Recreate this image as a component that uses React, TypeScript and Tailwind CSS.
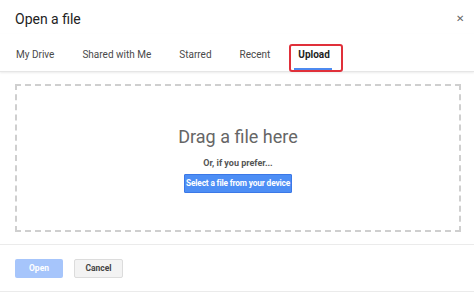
import React from "react";

export default function App() {
  const tabs = ["My Drive", "Shared with Me", "Starred", "Recent"];
  return (
    <div
      className="w-[474px] h-[294px] bg-white relative overflow-hidden flex flex-col"
      style={{ fontFamily: "Roboto, 'Liberation Sans', sans-serif" }}
    >
      <div className="h-[34px] pl-[15px] pt-[9px] text-[14px] leading-[20px] text-[#222] relative">
        Open a file
        <span className="absolute right-[10px] top-[12px] text-[#666] text-[10px] leading-[14px]">✕</span>
      </div>
      <div className="h-[38px] flex items-stretch pl-[2px] border-b border-[#e6e6e6] shadow-[0_1px_2px_rgba(0,0,0,0.08)] relative z-10">
        {tabs.map((t) => (
          <div key={t} className="px-[14px] flex items-center text-[10px] text-[#4a4a4a] pt-[4px]">
            {t}
          </div>
        ))}
        <div className="relative px-[14px] flex items-center text-[10px] font-bold text-[#222] pt-[4px]">
          Upload
          <div className="absolute left-[10px] right-[12px] bottom-[1px] h-[2px] bg-[#4d8af0]" />
          <div className="absolute left-[5px] right-[1px] top-[10px] bottom-[-1px] border-2 border-[#e0303a] rounded-[3px]" />
        </div>
      </div>
      <div className="pt-[12px] px-[15px] pr-[13px]">
        <div className="h-[148px] border-[2px] border-dashed border-[#cfcfcf] flex flex-col items-center pt-[40px]">
          <div className="text-[18px] leading-[22px] text-[#666]">Drag a file here</div>
          <div className="mt-[9px] text-[9px] leading-[12px] font-bold text-[#555]">Or, if you prefer...</div>
          <div className="mt-[5px] w-[108px] h-[19px] flex items-center justify-center bg-[#4d8ef5] border border-[#3b78e7] rounded-[1px] text-white text-[8.3px] font-bold tracking-[-0.15px]">
            Select a file from your device
          </div>
        </div>
      </div>
      <div className="mt-[12px] border-t border-[#ebebeb] flex-1 flex flex-col">
        <div className="flex gap-[11px] pl-[15px] pt-[14px]">
          <div className="w-[48px] h-[19px] flex items-center justify-center bg-[#a6c5fb] rounded-[2px] text-white text-[8.5px] font-bold">
            Open
          </div>
          <div className="w-[49px] h-[19px] flex items-center justify-center bg-[#f3f3f3] border border-[#dcdcdc] rounded-[2px] text-[#444] text-[8.5px] font-bold">
            Cancel
          </div>
        </div>
        <div className="mt-auto mb-[2px] border-b border-[#ebebeb]" />
      </div>
    </div>
  );
}
